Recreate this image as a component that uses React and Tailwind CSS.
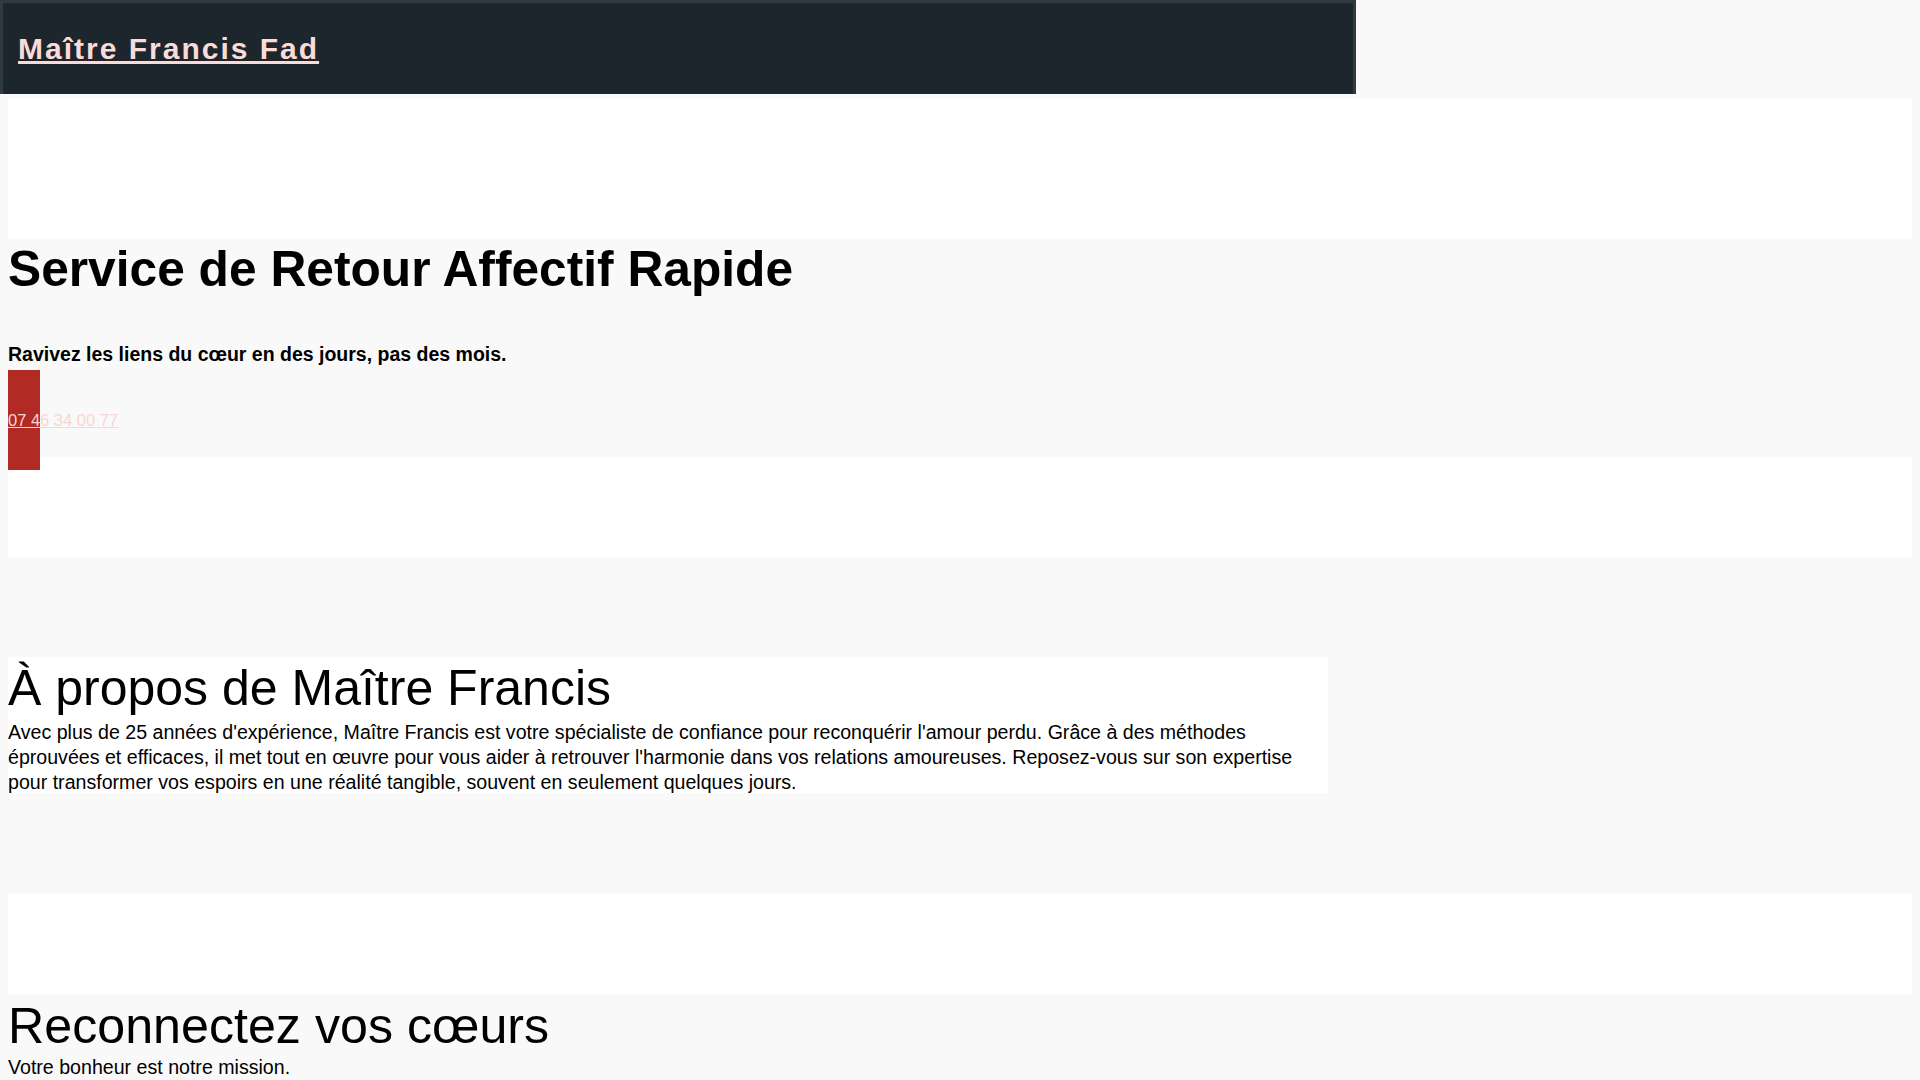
import React from 'react';

const App = () => {
  return (
    <div className="min-h-screen bg-[#f9f9f9] text-black font-['Liberation_Sans',Arial,sans-serif]">
      <header className="w-[1356px] h-[94px] bg-[#1d262d] border-[3px] border-b-0 border-[#2f3a41] flex items-center pl-[15px]">
        <a href="#" className="text-[30px] font-bold tracking-[2px] underline text-[#fadbd8]">
          Maître Francis Fad
        </a>
      </header>

      <main className="px-2 pt-1">
        <section className="h-[141px] bg-white" />

        <section className="h-[218px] bg-[#f9f9f9] pt-[6px]">
          <h1 className="text-[49.7px] font-bold leading-none">Service de Retour Affectif Rapide</h1>
          <p className="text-[19.5px] font-bold leading-none mt-[50px]">
            Ravivez les liens du cœur en des jours, pas des mois.
          </p>
          <a
            href="#"
            className="relative mt-[6px] flex items-center w-[32px] h-[100px] bg-[#b12a24] whitespace-nowrap text-[16.5px] underline text-[#fad6d2]"
          >
            07 46 34 00 77
          </a>
        </section>

        <section className="h-[100px] bg-white" />
        <section className="h-[100px] bg-[#f9f9f9]" />

        <section className="w-[1320px] h-[136px] bg-white pt-[6px]">
          <h2 className="text-[50px] leading-none">À propos de Maître Francis</h2>
          <p className="text-[19.6px] leading-[25px] mt-[7px]">
            Avec plus de 25 années d'expérience, Maître Francis est votre spécialiste de confiance pour reconquérir
            l'amour perdu. Grâce à des méthodes éprouvées et efficaces, il met tout en œuvre pour vous aider à retrouver
            l'harmonie dans vos relations amoureuses. Reposez-vous sur son expertise pour transformer vos espoirs en une
            réalité tangible, souvent en seulement quelques jours.
          </p>
        </section>

        <section className="h-[101px] bg-[#f9f9f9]" />
        <section className="h-[100px] bg-white" />

        <section className="bg-[#f9f9f9] pt-[7px] pb-[100px]">
          <h2 className="text-[50.2px] leading-none">Reconnectez vos cœurs</h2>
          <p className="text-[19.6px] leading-[25px] mt-[4px]">Votre bonheur est notre mission.</p>
        </section>

        <section className="h-[100px] bg-white" />
        <section className="h-[600px] bg-[#f9f9f9]" />
        <section className="h-[100px] bg-white" />
        <section className="h-[600px] bg-[#f9f9f9]" />
        <section className="h-[100px] bg-white" />
      </main>
    </div>
  );
};

export default App;
